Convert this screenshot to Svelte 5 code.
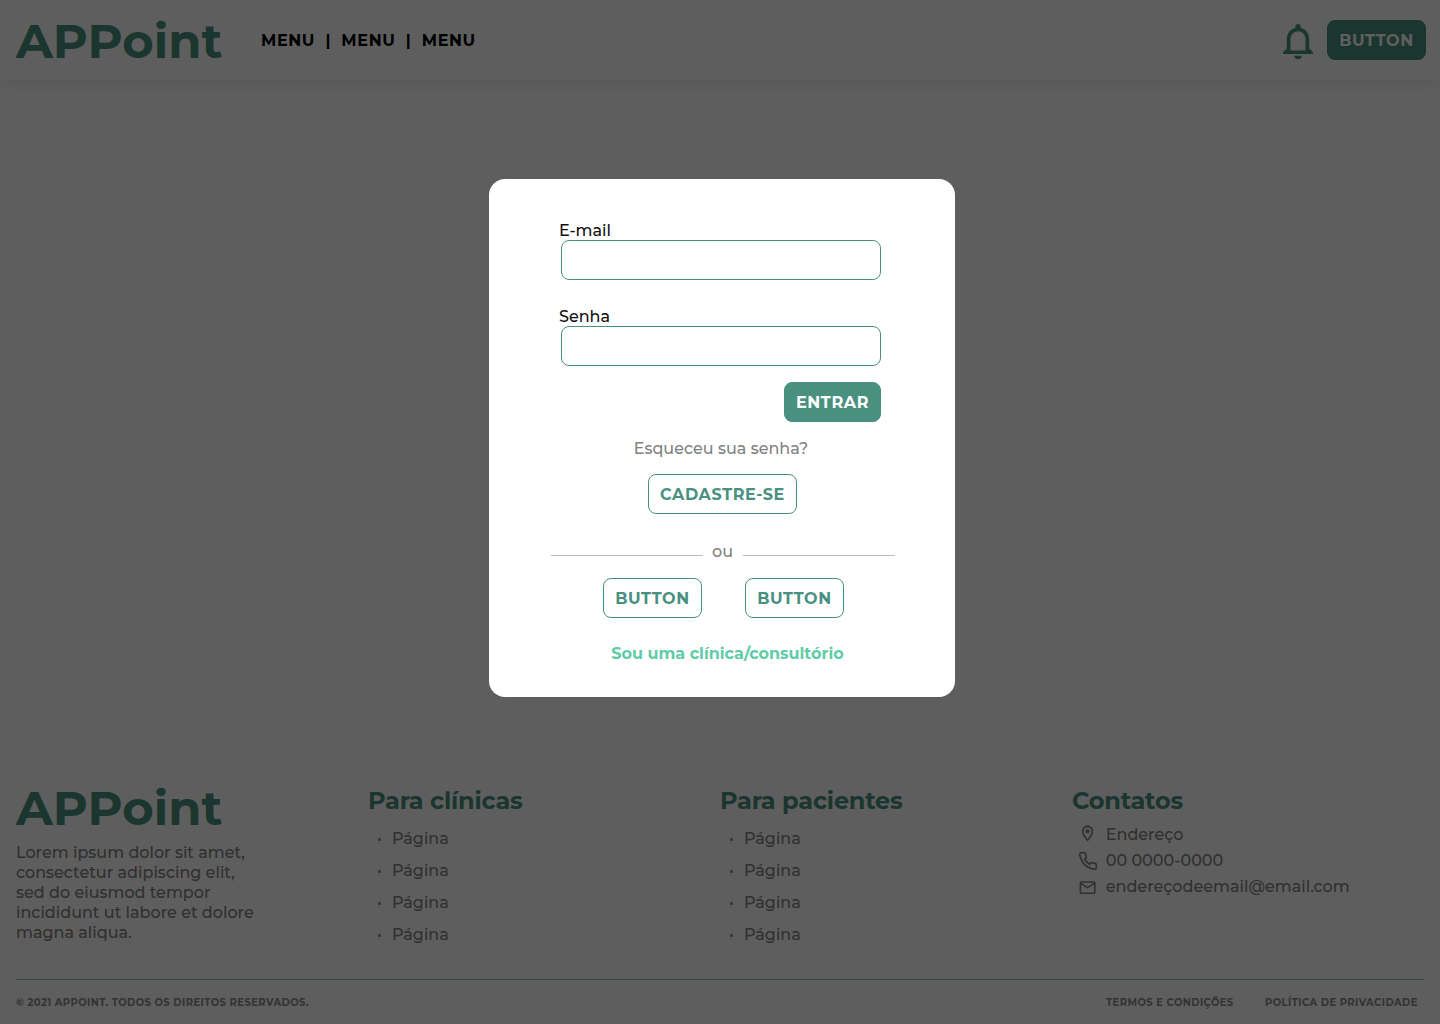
<script>
  const intro = [
    'Lorem ipsum dolor sit amet,',
    'consectetur adipiscing elit,',
    'sed do eiusmod tempor',
    'incididunt ut labore et dolore',
    'magna aliqua.'
  ];
  const pages = ['Página', 'Página', 'Página', 'Página'];
  const sections = ['Para clínicas', 'Para pacientes'];
  const menu = ['MENU', 'MENU', 'MENU'].join('  |  ');
</script>

<div class="page">
  <header>
    <span class="logo">APPoint</span>
    <nav>{menu}</nav>
    <svg class="bell" viewBox="4 2.5 16 19.5" preserveAspectRatio="none">
      <path d="M12 22c1.1 0 2-.9 2-2h-4c0 1.1.9 2 2 2zm6-6v-5c0-3.07-1.63-5.64-4.5-6.32V4c0-.83-.67-1.5-1.5-1.5s-1.5.67-1.5 1.5v.68C7.64 5.36 6 7.92 6 11v5l-2 2v1h16v-1l-2-2zm-2 1H8v-6c0-2.48 1.51-4.5 4-4.5s4 2.02 4 4.5v6z" />
    </svg>
    <button class="btn solid">BUTTON</button>
  </header>

  <main></main>

  <footer>
    <div class="columns">
      <section>
        <span class="logo">APPoint</span>
        <p class="intro">
          {#each intro as line}<span>{line}</span>{/each}
        </p>
      </section>
      {#each sections as title}
        <section>
          <h2>{title}</h2>
          <ul>
            {#each pages as p}<li>{p}</li>{/each}
          </ul>
        </section>
      {/each}
      <section>
        <h2>Contatos</h2>
        <div class="contacts">
          <div class="contact">
            <svg class="pin" viewBox="0 0 24 24"><path d="M12 2C8.13 2 5 5.13 5 9c0 5.25 7 13 7 13s7-7.75 7-13c0-3.87-3.13-7-7-7zM7 9c0-2.76 2.24-5 5-5s5 2.24 5 5c0 2.88-2.88 7.19-5 9.88C9.92 16.21 7 11.85 7 9z" /><circle cx="12" cy="9" r="2.5" /></svg>
            <span>Endereço</span>
          </div>
          <div class="contact">
            <svg class="phone" viewBox="0 0 24 24"><path d="M22 16.92v3a2 2 0 0 1-2.18 2 19.79 19.79 0 0 1-8.63-3.07 19.5 19.5 0 0 1-6-6 19.79 19.79 0 0 1-3.07-8.67A2 2 0 0 1 4.11 2h3a2 2 0 0 1 2 1.72 12.84 12.84 0 0 0 .7 2.81 2 2 0 0 1-.45 2.11L8.09 9.91a16 16 0 0 0 6 6l1.27-1.27a2 2 0 0 1 2.11-.45 12.84 12.84 0 0 0 2.81.7A2 2 0 0 1 22 16.92z" /></svg>
            <span>00 0000-0000</span>
          </div>
          <div class="contact">
            <svg class="mail" viewBox="0 0 24 24"><path d="M22 6c0-1.1-.9-2-2-2H4c-1.1 0-2 .9-2 2v12c0 1.1.9 2 2 2h16c1.1 0 2-.9 2-2V6zm-2 0l-8 5-8-5h16zm0 12H4V8l8 5 8-5v10z" /></svg>
            <span>endereçodeemail@email.com</span>
          </div>
        </div>
      </section>
    </div>
    <div class="legal">
      <span>© 2021 APPOINT. TODOS OS DIREITOS RESERVADOS.</span>
      <a>TERMOS E CONDIÇÕES</a>
      <a>POLÍTICA DE PRIVACIDADE</a>
    </div>
  </footer>

  <div class="overlay">
    <form class="dialog">
      <label><span>E-mail</span><input type="email" /></label>
      <label><span>Senha</span><input type="password" /></label>
      <button type="button" class="btn solid enter">ENTRAR</button>
      <a class="forgot">Esqueceu sua senha?</a>
      <button type="button" class="btn outline signup">CADASTRE-SE</button>
      <div class="divider"><hr /><span>ou</span><hr /></div>
      <div class="pair">
        <button type="button" class="btn outline">BUTTON</button>
        <button type="button" class="btn outline">BUTTON</button>
      </div>
      <a class="clinic">Sou uma clínica/consultório</a>
    </form>
  </div>
</div>

<style>
  :global(body) { margin: 0; background: #fff; }
  .page {
    position: relative;
    display: flex;
    flex-direction: column;
    height: 1024px;
    overflow: hidden;
    background: #fff;
    color: #828282;
    font: 500 16px/20px Montserrat, Inter, sans-serif;
    white-space: nowrap;
  }
  h2, p, ul { margin: 0; padding: 0; }

  header {
    box-sizing: border-box;
    flex: none;
    height: 80px;
    padding: 0 14px 0 16px;
    display: flex;
    align-items: center;
    box-shadow: 0 8px 16px -6px rgba(0, 0, 0, 0.11);
  }
  .logo {
    display: block;
    color: #499080;
    font-weight: 700;
    font-size: 48px;
    line-height: 56px;
    letter-spacing: 0.08px;
  }
  header .logo { width: 245px; padding-top: 2px; flex: none; }
  nav {
    padding-top: 2px;
    color: #000;
    font-weight: 700;
    letter-spacing: 0.04em;
    white-space: pre;
  }
  .bell { width: 30px; height: 35.5px; margin: 3px 14px 0 auto; fill: #499080; }

  .btn {
    box-sizing: border-box;
    width: 99px;
    height: 40px;
    padding: 2px 0 0;
    border: 1px solid #499080;
    border-radius: 8px;
    font: inherit;
    font-weight: 700;
    letter-spacing: 0.04em;
    text-align: center;
  }
  .solid { background: #499080; color: #fff; }
  .outline { background: #fff; color: #499080; }

  main { flex: 1; }

  footer { flex: none; height: 244px; padding: 0 16px; }
  .columns {
    display: grid;
    grid-template-columns: repeat(4, 352px);
    height: 199px;
    border-bottom: 1px solid rgba(73, 144, 128, 0.55);
  }
  .intro { padding-top: 7px; }
  .intro span { display: block; }
  h2 {
    padding-top: 6px;
    color: #499080;
    font-weight: 700;
    font-size: 24px;
    line-height: 30px;
    letter-spacing: -0.19px;
  }
  ul { list-style: none; padding-top: 7px; }
  li { display: flex; align-items: center; height: 32px; }
  li::before {
    content: '';
    width: 3px;
    height: 3px;
    margin: 1px 10.7px 0 10.3px;
    border-radius: 50%;
    background: #828282;
  }
  .contacts { padding: 5.5px 0 0 6px; }
  .contact { display: flex; align-items: center; height: 26px; }
  .contact svg { width: 19.2px; height: 19.2px; margin-right: 8.6px; fill: #828282; flex: none; }
  .contact .pin { margin-top: -1px; }
  .contact .phone { width: 20px; height: 20px; margin: 1px 7.8px 0 0; fill: none; stroke: #828282; stroke-width: 2; }
  .contact .mail { margin: 3px 8.2px 0 0.4px; }

  .legal {
    display: grid;
    grid-template-columns: 1090px 159px 1fr;
    padding-top: 17px;
    color: #8c8c8c;
    font-weight: 700;
    font-size: 10px;
    line-height: 12px;
    letter-spacing: 0.04em;
  }

  .overlay { position: absolute; inset: 0; background: rgba(0, 0, 0, 0.63); }
  .dialog {
    box-sizing: border-box;
    width: 466px;
    height: 518px;
    margin: 179px 0 0 489px;
    padding: 42px 60px 0 62px;
    border-radius: 16px;
    background: #fff;
    display: flex;
    flex-direction: column;
    align-items: center;
  }
  label { display: block; align-self: flex-start; padding: 0 0 27px 8px; color: #111; }
  label + label { padding-bottom: 16px; }
  label span { display: block; height: 19px; }
  input {
    display: block;
    box-sizing: border-box;
    width: 320px;
    height: 40px;
    margin: 0 0 0 2px;
    border: 1px solid #499080;
    border-radius: 8px;
    background: #fff;
  }
  .enter { width: 97px; align-self: flex-end; margin-right: 14px; }
  .forgot { padding-top: 16.5px; margin-right: 4px; }
  .signup { width: 149px; margin-top: 15.5px; margin-right: 1px; }
  .divider {
    align-self: stretch;
    display: flex;
    justify-content: space-between;
    padding-top: 27.5px;
  }
  .divider hr { width: 152px; height: 1px; margin: 13.5px 0 0; border: 0; background: #bdbdbd; }
  .divider span { padding-right: 1px; }
  .pair { display: flex; gap: 43px; padding-top: 16.5px; margin-left: 1px; }
  .clinic { padding-top: 25.5px; margin-left: 9px; color: #5fcca7; font-weight: 700; }
</style>
